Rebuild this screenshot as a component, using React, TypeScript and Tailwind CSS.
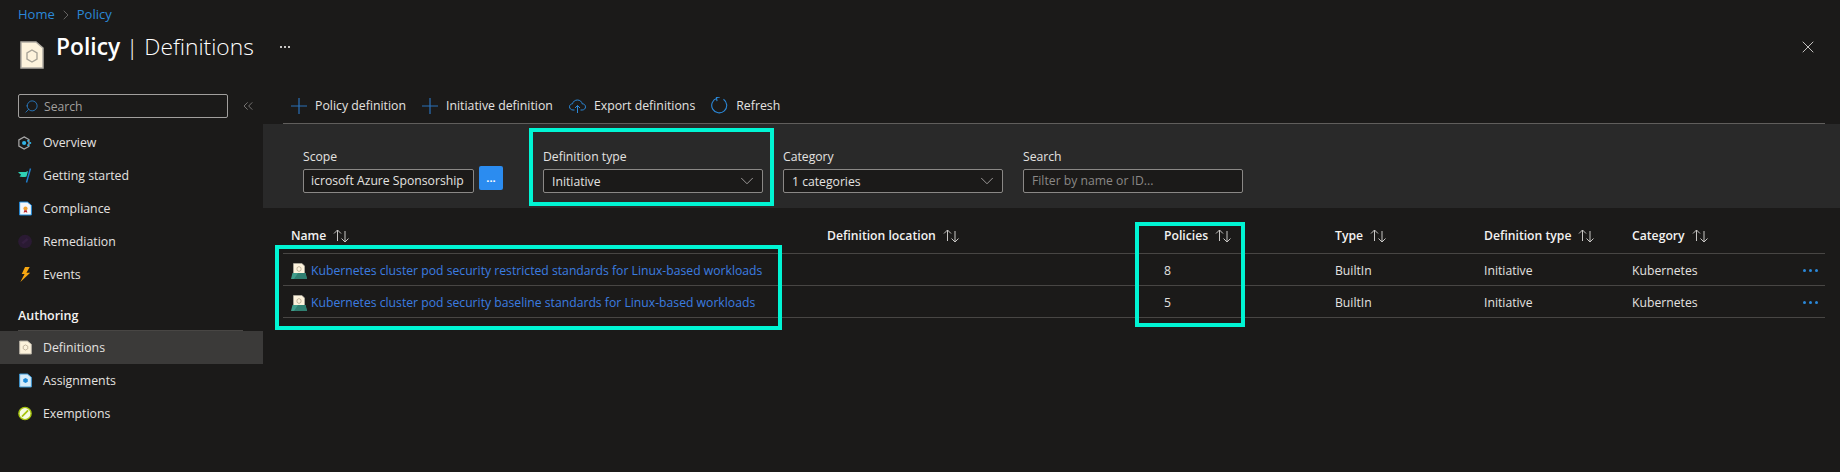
import { ReactNode } from "react";
import { ChevronDown, ChevronRight, X, Search, ChevronsLeft } from "lucide-react";

const NAV_TOP = ["Overview", "Getting started", "Compliance", "Remediation", "Events"];
const NAV_AUTHORING = ["Definitions", "Assignments", "Exemptions"];

const COLUMNS = ["Name", "Definition location", "Policies", "Type", "Definition type", "Category"];

const ROWS = [
  { name: "Kubernetes cluster pod security restricted standards for Linux-based workloads", policies: "8" },
  { name: "Kubernetes cluster pod security baseline standards for Linux-based workloads", policies: "5" },
];

function DocIcon({ fill, stroke, inner }: { fill: string; stroke: string; inner: ReactNode }) {
  return (
    <svg width="13" height="15" viewBox="0 0 20 22" className="shrink-0">
      <path d="M1 1h12l6 5v15H1z" fill={fill} stroke={stroke} strokeWidth="1.5" />
      {inner}
    </svg>
  );
}

function NavIcon({ name }: { name: string }) {
  switch (name) {
    case "Overview":
      return (
        <svg width="16" height="16" viewBox="0 0 16 16">
          <path d="M7 1l5.5 3v8L7 15l-6-3.5v-7z" fill="none" stroke="#a8a8a8" strokeWidth="1.4" />
          <circle cx="7" cy="8" r="2.4" fill="#32b5e8" />
          <rect x="10.5" y="4.5" width="2" height="2" fill="#32b5e8" />
          <rect x="13" y="7" width="2" height="2" fill="#32b5e8" />
          <rect x="10.5" y="9.5" width="2" height="2" fill="#32b5e8" />
        </svg>
      );
    case "Getting started":
      return (
        <svg width="14" height="15" viewBox="0 0 14 15">
          <path d="M0 4.500c3-1.500 6 .8 10-1.500l-1.500 5.500C5.500 10 3.500 8 1.500 9L3 6.500z" fill="#2fd0b5" />
          <path d="M12.500 0.500L8.500 14.500" stroke="#1f7fd0" strokeWidth="1.400" />
        </svg>
      );
    case "Compliance":
      return (
        <DocIcon
          fill="#f4f8fc"
          stroke="#1c8ce0"
          inner={
            <>
              <circle cx="10" cy="11" r="3.200" fill="#f0a030" />
              <path d="M8 13.500l-.8 4 2.800-1.200 2.800 1.200-.8-4z" fill="#c0282c" />
            </>
          }
        />
      );
    case "Remediation":
      return (
        <svg width="15" height="15" viewBox="0 0 16 16">
          <circle cx="8" cy="8" r="7.800" fill="#2a1a33" />
          <path d="M4 9l6-5 2 2-6 5z" fill="#341f3f" />
        </svg>
      );
    case "Events":
      return (
        <svg width="11" height="15" viewBox="0 0 11 16">
          <path d="M5 0L1.500 7.500h3L0 16l10.500-10H6.500L10 0z" fill="#f7a711" />
        </svg>
      );
    case "Definitions":
      return (
        <DocIcon
          fill="#fdf3dc"
          stroke="#b5b0a4"
          inner={<path d="M10 7l3.500 2v4L10 15l-3.500-2V9z" fill="none" stroke="#b5a890" strokeWidth="1.200" />}
        />
      );
    case "Assignments":
      return (
        <DocIcon
          fill="#d7ecf8"
          stroke="#3c9ad8"
          inner={<path d="M10 7l3.500 2v4L10 15l-3.500-2V9z" fill="#1c8ad8" />}
        />
      );
    default:
      return (
        <svg width="15" height="15" viewBox="0 0 16 16">
          <circle cx="8" cy="8" r="7" fill="#f6fae0" stroke="#a6c40c" strokeWidth="1.600" />
          <path d="M4.500 11.500l7-7" stroke="#a6c40c" strokeWidth="2" />
        </svg>
      );
  }
}

function NavItem({ label, active }: { label: string; active?: boolean }) {
  return (
    <div className={`flex h-[33px] items-center gap-[11px] pl-[18px] ${active ? "bg-[#3b3a39]" : ""}`}>
      <div className="flex w-[14px] justify-center">
        <NavIcon name={label} />
      </div>
      <span className="pt-[2px] text-[12.3px] text-[#e4e2e0]">{label}</span>
    </div>
  );
}

function SortArrows() {
  return (
    <svg width="17" height="14" viewBox="0 0 17 14" className="ml-[7px] shrink-0" fill="none" stroke="#c8c6c4" strokeWidth="1">
      <path d="M4.500 12V1M1 4.500L4.500 1 8 4.500" />
      <path d="M12 2v11M8.500 9.500L12 13l3.500-3.500" />
    </svg>
  );
}

function InitiativeIcon() {
  return (
    <svg width="16" height="16" viewBox="0 0 16 16" className="shrink-0">
      <path d="M2.500 0.500h8.500l2.500 2.500v8h-11z" fill="#fdf3dc" stroke="#b5b0a4" strokeWidth="0.7" />
      <path d="M8 3.500l2 1.200v2.600L8 8.500 6 7.300V4.700z" fill="none" stroke="#b5a890" strokeWidth="0.8" />
      <path d="M1.500 10h13l1.500 6H0z" fill="#3f9c8a" />
      <path d="M7 10h7.500l1.500 6H3z" fill="#2f7f71" />
    </svg>
  );
}

function PlusIcon() {
  return (
    <svg width="16" height="16" viewBox="0 0 16 16" className="shrink-0" fill="none" stroke="#2a70b8" strokeWidth="1.200">
      <path d="M8 0v16M0 8h16" />
    </svg>
  );
}

function CloudIcon() {
  return (
    <svg width="17" height="14" viewBox="0 0 17 14" className="shrink-0" fill="none" stroke="#2b88d8" strokeWidth="1">
      <path d="M5.500 11H4C2 11 .5 9.500 .5 7.800 .5 6 2 4.800 3.500 4.800 4 2.500 6 1 8.500 1c2.500 0 4.300 1.700 4.700 3.800 1.900 0 3.300 1.300 3.300 3.100 0 1.700-1.400 3.100-3.300 3.100H11.500" />
      <path d="M8.500 14V6.500M6 9l2.500-2.500L11 9" />
    </svg>
  );
}

function RefreshIcon() {
  return (
    <svg width="17" height="17" viewBox="0 0 17 17" className="shrink-0" fill="none" stroke="#2b88d8" strokeWidth="1.100">
      <path d="M6 1.200A7.500 7.500 0 1 0 12.500 2.200" />
      <path d="M9 .5h-3.500v3.500" transform="rotate(-10 6 1)" />
    </svg>
  );
}

function ToolbarButton({ icon, label }: { icon: ReactNode; label: string }) {
  return (
    <div className="flex items-center gap-[8px]">
      {icon}
      <span className="pt-[2px] text-[12.3px] text-[#e4e2e0]">{label}</span>
    </div>
  );
}

function Select({ value }: { value: string }) {
  return (
    <div className="flex h-[24px] w-[220px] items-center justify-between rounded-[2px] border border-[#8a8886] bg-[#1b1a19] pl-[8px] pr-[4px]">
      <span className="pt-[2px] text-[12.2px] text-[#e4e2e0]">{value}</span>
      <ChevronDown size={22} strokeWidth={0.8} className="text-[#c8c6c4]" />
    </div>
  );
}

function RowDots() {
  return (
    <div className="flex gap-[3px]">
      <span className="h-[3px] w-[3px] rounded-full bg-[#2b88d8]" />
      <span className="h-[3px] w-[3px] rounded-full bg-[#2b88d8]" />
      <span className="h-[3px] w-[3px] rounded-full bg-[#2b88d8]" />
    </div>
  );
}

export default function App() {
  return (
    <div
      className="relative h-[472px] w-[1840px] overflow-hidden bg-[#1b1a19] pt-[6px] text-[#e4e2e0]"
      style={{ fontFamily: '"Open Sans", "Noto Sans", sans-serif' }}
    >
      {/* Header */}
      <div className="flex h-[16px] items-center pl-[18px] pt-[1px] text-[13px] text-[#2b88d8]">
        <span>Home</span>
        <ChevronRight size={16} strokeWidth={1} className="mx-[3px] text-[#8a8886]" />
        <span>Policy</span>
      </div>
      <div className="flex h-[66px] items-start pr-[22px]">
        <svg width="24" height="28" viewBox="0 0 24 28" className="ml-[20px] mt-[19px] shrink-0">
          <path d="M1 1h15l7 6v20H1z" fill="#fdf3dc" stroke="#b0aca2" strokeWidth="1.500" />
          <path d="M12 9l5 3v6l-5 3-5-3v-6z" fill="none" stroke="#a8a498" strokeWidth="1.400" />
        </svg>
        <h1 className="ml-[12px] mt-[9px] text-[22.8px] leading-[32px] text-white">
          <span className="font-semibold">Policy</span>
          <span className="font-light"> | Definitions</span>
        </h1>
        <div className="ml-[26px] mt-[24px] flex gap-[2px]">
          <span className="h-[2px] w-[2px] bg-[#c8c6c4]" />
          <span className="h-[2px] w-[2px] bg-[#c8c6c4]" />
          <span className="h-[2px] w-[2px] bg-[#c8c6c4]" />
        </div>
        <X size={20} strokeWidth={1} className="ml-auto mt-[15px] text-[#e4e2e0]" />
      </div>

      <div className="flex">
        {/* Sidebar */}
        <aside className="w-[263px] shrink-0 pt-[6px]">
          <div className="flex h-[24px] items-center">
            <div className="ml-[18px] flex h-[24px] w-[210px] items-center gap-[5px] rounded-[2px] border border-[#a19f9d] pl-[5px]">
              <Search size={15} strokeWidth={1.250} className="-scale-x-100 text-[#2b88d8]" />
              <span className="pt-[2px] text-[12.2px] text-[#a19f9d]">Search</span>
            </div>
            <ChevronsLeft size={16} strokeWidth={1} className="ml-[12px] text-[#a19f9d]" />
          </div>
          <div className="mt-[8px]">
            {NAV_TOP.map((item) => (
              <NavItem key={item} label={item} />
            ))}
          </div>
          <div className="ml-[18px] mr-[20px] flex h-[40px] items-end border-b border-[#484644] pb-[4px] text-[12.5px] font-semibold text-[#f3f2f1]">
            Authoring
          </div>
          {NAV_AUTHORING.map((item) => (
            <NavItem key={item} label={item} active={item === "Definitions"} />
          ))}
        </aside>

        {/* Main */}
        <main className="flex-1">
          <div className="ml-[20px] mr-[15px] flex h-[36px] items-center gap-[16px] border-b border-[#605e5c] pl-[8px]">
            <ToolbarButton icon={<PlusIcon />} label="Policy definition" />
            <ToolbarButton icon={<PlusIcon />} label="Initiative definition" />
            <ToolbarButton icon={<CloudIcon />} label="Export definitions" />
            <ToolbarButton icon={<RefreshIcon />} label="Refresh" />
          </div>

          {/* Filters */}
          <div className="flex h-[84px] items-start bg-[#292929] pl-[40px] pt-[24px]">
            <div className="mr-[20px]">
              <div className="mb-[3px] h-[18px] text-[12.2px] leading-[18px]">Scope</div>
              <div className="flex items-start">
                <div className="flex h-[24px] w-[171px] items-center overflow-hidden rounded-[2px] border border-[#8a8886] bg-[#1b1a19] pl-[7px] pt-[1px] text-[12.2px] whitespace-nowrap">
                  icrosoft Azure Sponsorship
                </div>
                <div className="ml-[5px] -mt-[3px] flex h-[24px] w-[24px] items-center justify-center rounded-[2px] bg-[#2b8cf0] text-[11px] font-bold text-white">
                  ...
                </div>
              </div>
            </div>
            <div className="ml-[20px] mr-[20px]">
              <div className="mb-[3px] h-[18px] text-[12.2px] leading-[18px]">Definition type</div>
              <Select value="Initiative" />
            </div>
            <div className="mr-[20px]">
              <div className="mb-[3px] h-[18px] text-[12.2px] leading-[18px]">Category</div>
              <Select value="1 categories" />
            </div>
            <div>
              <div className="mb-[3px] h-[18px] text-[12.2px] leading-[18px]">Search</div>
              <div className="flex h-[24px] w-[220px] items-center rounded-[2px] border border-[#8a8886] bg-[#1b1a19] pl-[8px] text-[12.2px] text-[#8a8886]">
                Filter by name or ID...
              </div>
            </div>
          </div>

          {/* Table */}
          <div className="ml-[20px] mr-[15px] mt-[12px]">
            <div className="grid h-[33px] grid-cols-[536px_337px_171px_149px_148px_1fr] items-center pl-[8px] text-[12.2px] font-semibold text-[#f3f2f1]">
              {COLUMNS.map((col) => (
                <div key={col} className="flex items-center">
                  {col}
                  <SortArrows />
                </div>
              ))}
            </div>
            {ROWS.map((row) => (
              <div
                key={row.name}
                className="grid h-[32px] grid-cols-[536px_337px_171px_149px_148px_1fr] items-center border-t border-[#484644] pl-[8px] pt-[3px] text-[12.2px] last:h-[33px] last:border-b"
              >
                <div className="flex items-center gap-[4px] whitespace-nowrap text-[#3b7de0]">
                  <InitiativeIcon />
                  {row.name}
                </div>
                <div />
                <div>{row.policies}</div>
                <div>BuiltIn</div>
                <div>Initiative</div>
                <div className="flex items-center justify-between pr-[7px]">
                  <span>Kubernetes</span>
                  <RowDots />
                </div>
              </div>
            ))}
          </div>
        </main>
      </div>

      {/* Highlight boxes drawn on the screenshot */}
      <div className="absolute left-[529px] top-[128px] h-[78px] w-[245px] border-[4px] border-[#00f5d4]" />
      <div className="absolute left-[275px] top-[245px] h-[85px] w-[507px] border-[4px] border-[#00f5d4]" />
      <div className="absolute left-[1135px] top-[222px] h-[105px] w-[110px] border-[4px] border-[#00f5d4]" />
    </div>
  );
}
